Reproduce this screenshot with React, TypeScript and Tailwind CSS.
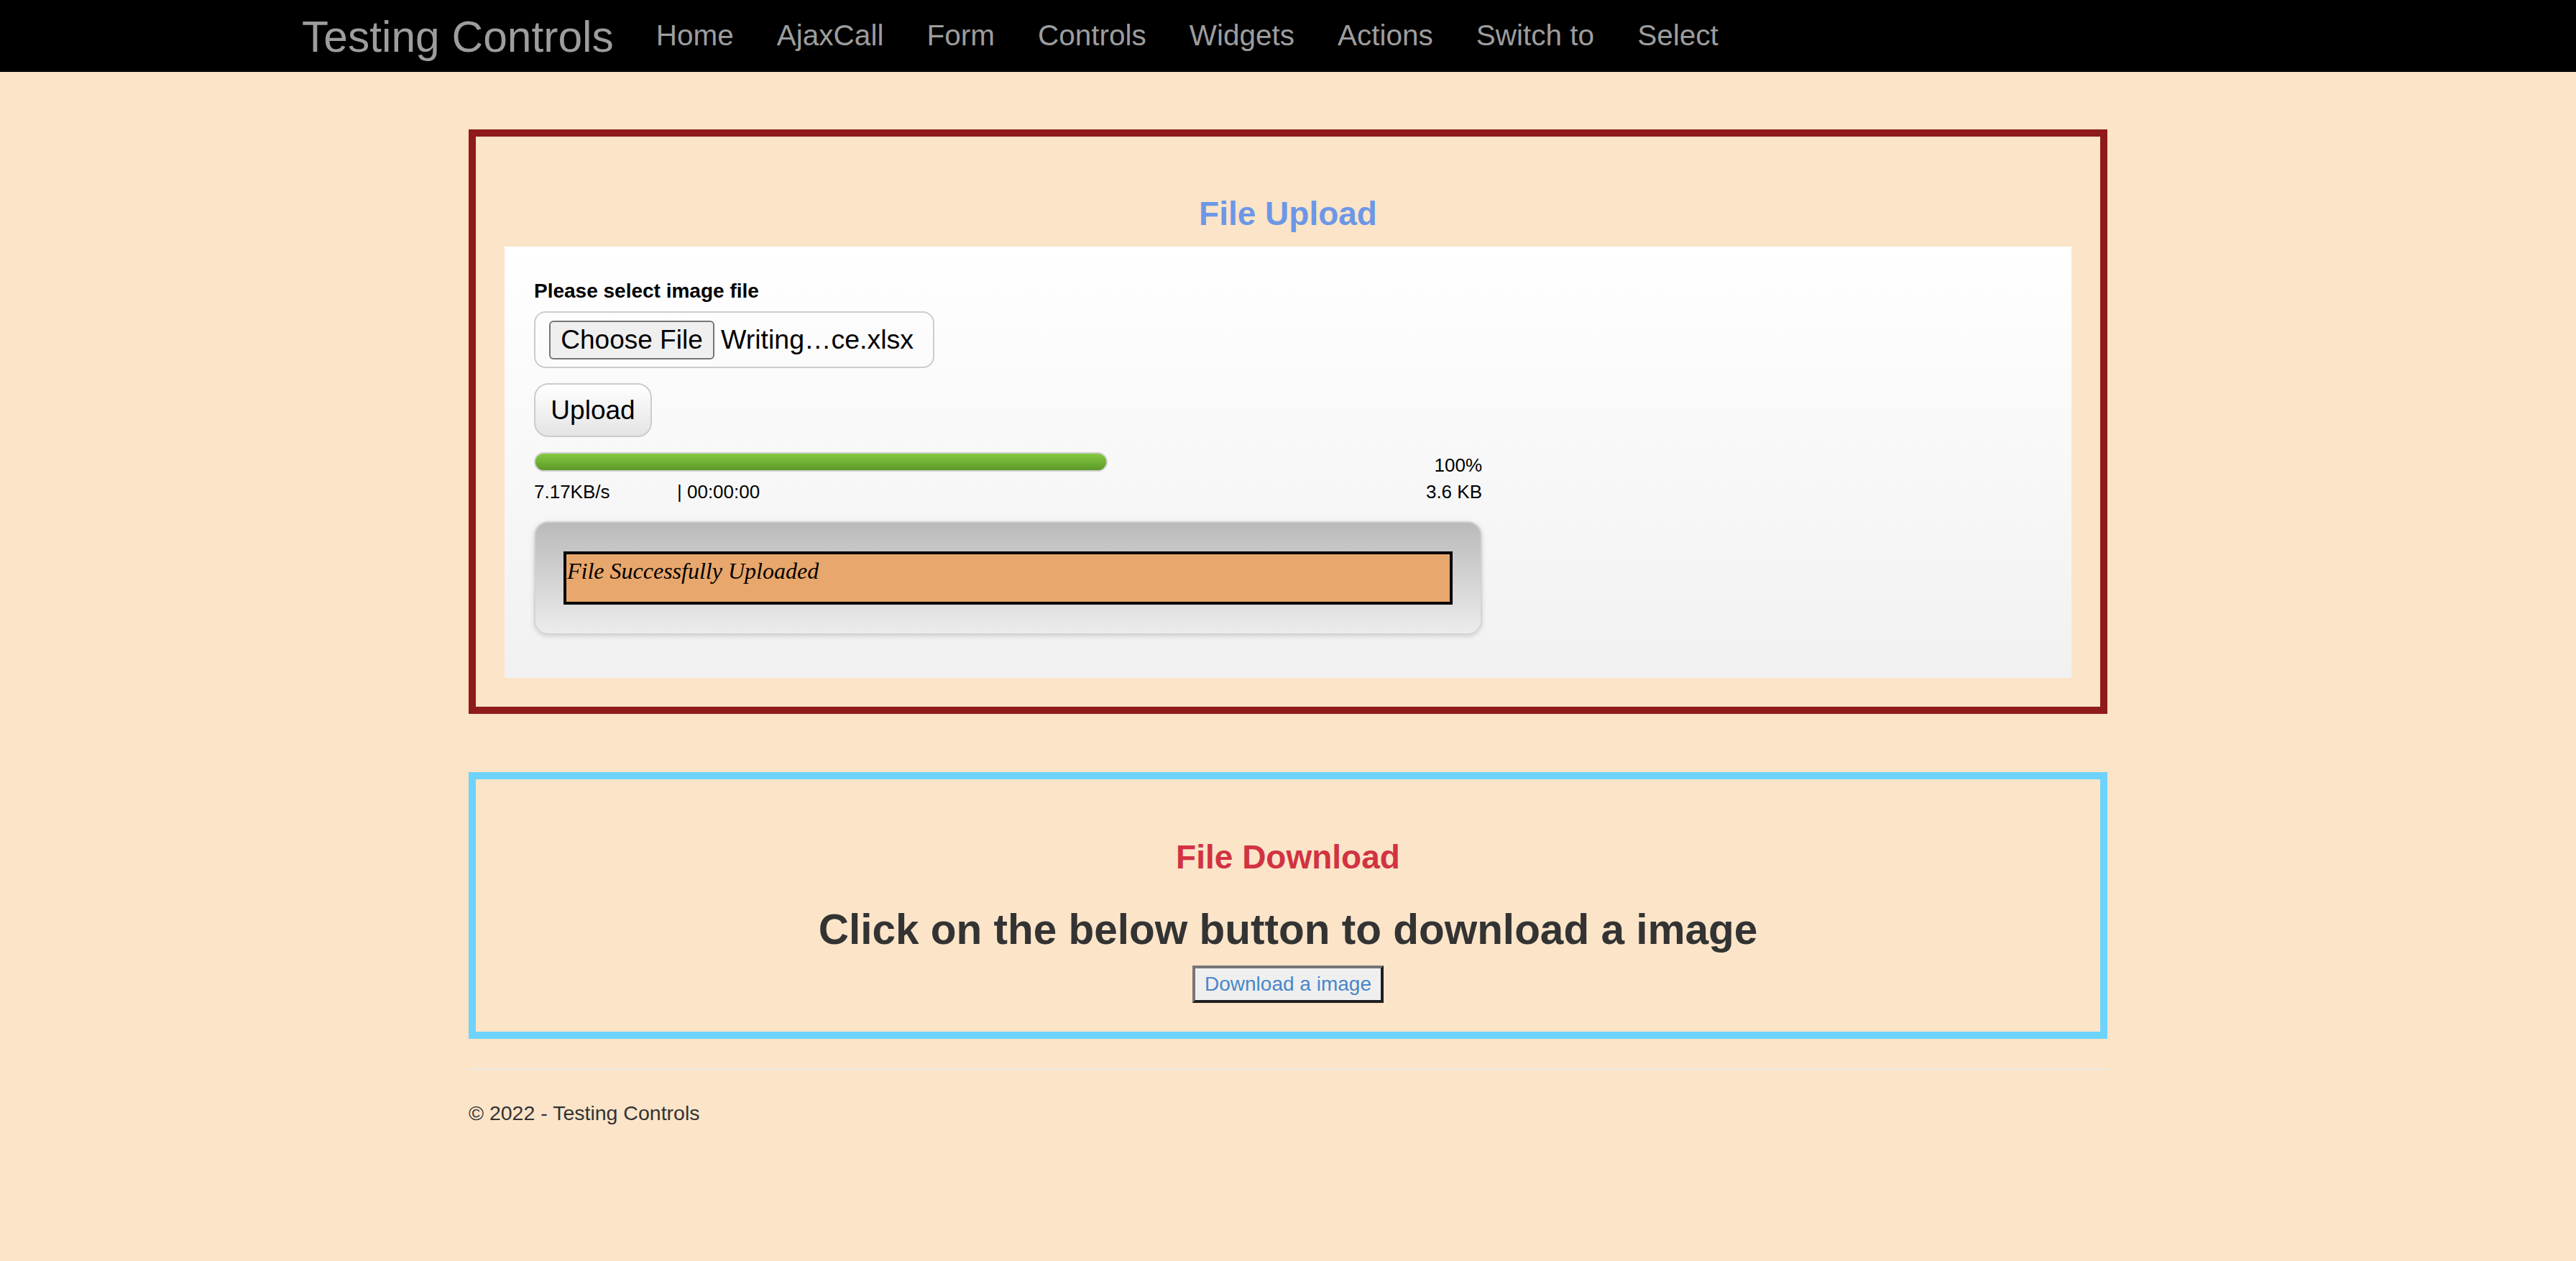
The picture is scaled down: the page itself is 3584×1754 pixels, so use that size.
import React from 'react';

const navLinks = ['Home', 'AjaxCall', 'Form', 'Controls', 'Widgets', 'Actions', 'Switch to', 'Select'];

const Navbar: React.FC = () => (
  <div className="h-[100px] w-full bg-black">
    <div className="flex items-start pl-[420px]">
      <span className="mt-[21px] text-[60.5px] leading-[60px] text-[#9d9d9d]">Testing Controls</span>
      <ul className="ml-[29px] flex">
        {navLinks.map((l) => (
          <li key={l} className="px-[30px] pt-[29px] text-[40.5px] leading-[40px] text-[#9d9d9d]">
            {l}
          </li>
        ))}
      </ul>
    </div>
  </div>
);

const UploadPanel: React.FC = () => (
  <div className="mt-[21px] bg-gradient-to-b from-white to-[#f1f1f1] px-[41px] pt-[42px] pb-[60px] text-black">
    <div className="h-[40px] text-[28px] font-bold leading-[40px]">Please select image file</div>

    <div className="mt-[8px] flex h-[79px] w-[557px] items-center rounded-[16px] border-2 border-[#cccccc] pl-[19px]">
      <div className="flex h-[54px] w-[230px] items-center justify-center rounded-[6px] border-2 border-[#767676] bg-[#efefef] text-[37px]">
        Choose File
      </div>
      <span className="ml-[9px] text-[37.5px]">Writing…ce.xlsx</span>
    </div>

    <div className="mt-[21px] flex h-[75px] w-[164px] items-center justify-center rounded-[20px] border-2 border-[#cccccc] bg-gradient-to-b from-white to-[#e4e4e4] text-[37px]">
      Upload
    </div>

    <div className="mt-[21px] flex h-[27px] w-[1319px] items-end justify-between">
      <div className="h-[27px] w-[798px] rounded-full border-2 border-[#cfcfcf] bg-gradient-to-b from-[#86ca40] to-[#5c982a]" />
      <span className="translate-y-[4px] text-[26px] leading-[26px]">100%</span>
    </div>

    <div className="mt-[10px] flex h-[36px] w-[1319px] text-[26px] leading-[36px]">
      <span className="w-[199px]">7.17KB/s</span>
      <span>| 00:00:00</span>
      <span className="ml-auto">3.6 KB</span>
    </div>

    <div className="mt-[23px] w-[1319px] rounded-[20px] border-2 border-[#d4d4d4] bg-gradient-to-b from-[#bababa] to-[#ececec] px-[39px] py-[40px] shadow-[0_2px_6px_rgba(0,0,0,0.15)]">
      <div className="h-[74px] border-4 border-black bg-[#e8a76c] pt-[3px] pl-[1px] font-['Liberation_Serif',serif] text-[32px] italic leading-[40px]">
        File Successfully Uploaded
      </div>
    </div>
  </div>
);

export default function App() {
  return (
    <div className="min-h-[1754px] bg-[#fbe4c8] font-['Liberation_Sans',Arial,sans-serif]">
      <Navbar />
      <div className="mx-auto w-[2280px] pt-[80px]">
        <div className="border-[10px] border-[#8f1a1a] px-[40px] pt-[82px] pb-[40px]">
          <h3 className="text-center text-[46px] font-bold leading-[50px] text-[#6d97e6]">File Upload</h3>
          <UploadPanel />
        </div>

        <div className="mt-[81px] border-[10px] border-[#6dd3fc] pt-[83px] pb-[40px] text-center">
          <h3 className="text-[46px] font-bold leading-[50px] text-[#d13342]">File Download</h3>
          <h2 className="mt-[44px] text-[58.5px] font-bold leading-[64px] text-[#333333]">
            Click on the below button to download a image
          </h2>
          <div className="mt-[18px] flex justify-center">
            <div className="flex h-[52px] w-[266px] items-center justify-center border-4 border-t-[#767676] border-l-[#767676] border-r-[#1f1f1f] border-b-[#1f1f1f] bg-[#efefef] text-[28px] text-[#4a86c8]">
              Download a image
            </div>
          </div>
        </div>

        <div className="mt-[41px] border-t-2 border-[#eeeae4]" />
        <div className="mt-[40px] text-[28.5px] leading-[40px] text-[#333333]">© 2022 - Testing Controls</div>
      </div>
    </div>
  );
}
